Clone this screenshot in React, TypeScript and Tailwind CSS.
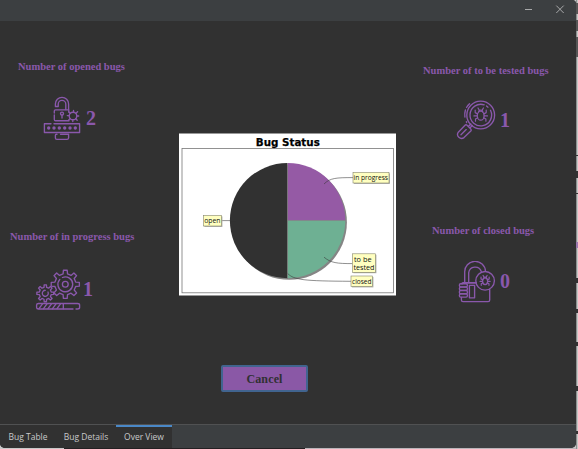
import React from "react";

const PURPLE = "#8a58ac";

function gearPath(cx: number, cy: number, outer: number, inner: number, teeth: number) {
  const pts: string[] = [];
  const step = (Math.PI * 2) / teeth;
  for (let i = 0; i < teeth; i++) {
    const a = i * step - Math.PI / 2;
    [
      [inner, -0.27],
      [outer, -0.17],
      [outer, 0.17],
      [inner, 0.27],
    ].forEach(([r, o]) => {
      pts.push(`${(cx + r * Math.cos(a + o * step)).toFixed(2)} ${(cy + r * Math.sin(a + o * step)).toFixed(2)}`);
    });
  }
  return `M${pts.join("L")}Z`;
}

function Bug({ x, y, s }: { x: number; y: number; s: number }) {
  return (
    <g transform={`translate(${x} ${y}) scale(${s})`} strokeWidth={1.2 / s}>
      <ellipse cx="0" cy="1" rx="3.3" ry="4.3" />
      <path d="M-2 -2.5C-2 -5 2 -5 2 -2.5M-1.4 -4.4L-2.6 -6.5M1.4 -4.4L2.6 -6.5M-3 -.8L-5.3 -2V-4.5M3 -.8L5.3 -2V-4.5M-3.3 1.2H-6.5M3.3 1.2H6.5M-2.8 3L-5 4.2V6.3M2.8 3L5 4.2V6.3" />
    </g>
  );
}

const iconProps = { fill: "none", stroke: PURPLE, strokeWidth: 1.35, strokeLinejoin: "round" as const, strokeLinecap: "round" as const };

function OpenedIcon() {
  return (
    <svg className="h-[45px] w-[38px] shrink-0" viewBox="43 96 38 45" {...iconProps}>
      <path d="M55.4 106.5V104a6.6 6.6 0 0 1 13.2 0V109.5M58.2 106.5V104.2a3.8 3.8 0 0 1 7.6 0V109.5M55.4 106.5H58.2" />
      <path d="M68 109.8H55.5a1.2 1.2 0 0 0-1.2 1.2V113M54.3 115V119.5a1.2 1.2 0 0 0 1.2 1.2H69" />
      <circle cx="62" cy="113.6" r="1.5" />
      <path d="M62 115.2V118M68.8 110V112" />
      <circle cx="73" cy="116" r="3.8" />
      <path d="M68.8 112L70.2 113.3M73.5 110.5V112M76 113.3L77.6 111.8M77 116H78.7M75.8 118.8L77.2 120.3M72.8 120V121.6M70 118.6L68.7 120M67.3 115.6H69" />
      <path d="M54 123.7H79.6V132.5H44.4V123.7H51" />
      <g fill={PURPLE} stroke="none">
        {[48.7, 54, 59.3, 64.7, 70, 75.3].map((x) => <circle key={x} cx={x} cy="128" r="1.7" />)}
      </g>
      <path d="M57 134.2H56.4a1 1 0 0 0-1 1V138a1.4 1.4 0 0 0 1.4 1.4H67a1.6 1.6 0 0 0 1.6-1.4V134.2H60.5" />
    </svg>
  );
}

function TestedIcon() {
  return (
    <svg className="h-[40px] w-[40px] shrink-0" viewBox="456 100 40 40" {...iconProps}>
      <circle cx="480.7" cy="115" r="13.9" />
      <path d="M490.5 110.3A10.8 10.8 0 1 1 484.2 104.8M486.5 106L488 107.2" />
      <path d="M466.6 122.5L466.4 121.6M464.9 117A16.2 16.2 0 0 1 465.4 110M466.5 107.5A16.5 16.5 0 0 1 469.5 103.8" />
      <path d="M466.8 125.1L470.8 129.1Q471.6 130 470.8 131L464 137.6C460.5 140.2 455.7 136 458.3 132.2L465 125.3Q466 124.3 466.8 125.1ZM468.4 126.4L470.8 124M469.9 127.9L472.3 125.5M461 134.8L466.2 129.6" />
      <Bug x={480.7} y={114.7} s={1.04} />
    </svg>
  );
}

function ProgressIcon() {
  return (
    <svg className="h-[42px] w-[46px] shrink-0" viewBox="35 269 46 42" {...iconProps}>
      <path d={gearPath(65.3, 284.3, 14.2, 10.6, 8)} />
      <path d="M62.5 277.5A7.4 7.4 0 1 1 59.8 279.4" />
      <circle cx="65.3" cy="284.3" r="2.9" />
      <path d={gearPath(45.3, 293.3, 8.5, 6.1, 8)} />
      <path d="M48 292A3 3 0 1 1 45.3 290.3" />
      <path d="M73 309H38.5Q36.6 309 36.6 307.5V305Q36.6 303.5 38.5 303.5H77.5Q79.6 303.5 79.6 305V307.5Q79.6 309 77.5 309H76" />
      <path d="M39 308.7L42.5 303.8M43.5 308.7L47 303.8M48 308.7L51.5 303.8M52.5 308.7L56 303.8M57 308.7L60.5 303.8M63.3 303.8V308.7" />
    </svg>
  );
}

function ClosedIcon() {
  return (
    <svg className="h-[42px] w-[38px] shrink-0" viewBox="458 261 38 42" {...iconProps}>
      <path d="M464.7 282.7V272.3a10.4 10.4 0 0 1 20.8-1M468.7 282.7V272.7a6.5 6.5 0 0 1 12.6-1.2M464.7 282.7H476" />
      <circle cx="485.1" cy="280.8" r="9.3" />
      <path d="M462 284V283.7a1 1 0 0 1 1-1H476M489.7 289.5V300a1.6 1.6 0 0 1-1.6 1.6H463a1.6 1.6 0 0 1-1.6-1.6V297.5" />
      {[283.7, 287.1, 290.5, 293.9].map((y) => <rect key={y} x="459.4" y={y} width="8" height="3.2" rx="1.3" />)}
      <rect x="469.4" y="285.4" width="5.2" height="12.4" />
      <Bug x={485.1} y={280.5} s={0.77} />
    </svg>
  );
}

function BugChart() {
  const labels = [
    { x: 353, y: 172.5, w: 36, h: 10.5 },
    { x: 203.5, y: 215.5, w: 18, h: 10.5 },
    { x: 352.5, y: 253.8, w: 23, h: 18.5 },
    { x: 351, y: 276, w: 21.5, h: 10.5 },
  ];
  return (
    <svg className="block h-[163px] w-[218px]" viewBox="179 133 218 163">
      <rect x="179" y="133.5" width="217" height="162" fill="#fff" />
      <rect x="182" y="148.5" width="211.5" height="144.3" fill="#fff" stroke="#777" strokeWidth=".8" />
      <text x="255.8" y="145.6" fontSize="11.2" fontWeight="700" fontFamily="'DejaVu Sans', sans-serif" textLength="64" lengthAdjust="spacingAndGlyphs" stroke="#000" strokeWidth=".25">Bug Status</text>
      <circle cx="289.3" cy="222.2" r="57.6" fill="#858585" />
      <path d="M287.5 163V278.2A57.6 57.6 0 0 1 287.5 163Z" fill="#313131" />
      <path d="M287.7 220.5V163A57.6 57.6 0 0 1 345.3 220.5Z" fill="#955aa5" />
      <path d="M287.7 220.5H345.3A57.6 57.6 0 0 1 287.7 278.2Z" fill="#6eb093" />
      <path d="M287.5 163V278.2M287.5 220.5H345.3" stroke="#858585" strokeWidth=".6" />
      <g fill="none" stroke="#333" strokeWidth=".55">
        <path d="M324 184C330 178 336 177.6 353 177.6M222 220.6H236M324 257.2C331 263 337 263.6 352.5 263.6M287.7 273.5C294 280 304 281 351 281.3" />
      </g>
      {labels.map((l) => (
        <g key={l.y}>
          <rect x={l.x + 0.9} y={l.y + 0.9} width={l.w} height={l.h} fill="#aaa" />
          <rect x={l.x} y={l.y} width={l.w} height={l.h} fill="#ffffc0" stroke="#85856a" strokeWidth=".6" />
        </g>
      ))}
      <g fontSize="7.6" fontFamily="'Open Sans', sans-serif" fill="#111">
        <text x="353.5" y="180.4" textLength="34.5" lengthAdjust="spacingAndGlyphs">in progress</text>
        <text x="204.2" y="223.2" textLength="16.3" lengthAdjust="spacingAndGlyphs">open</text>
        <text x="354" y="261.7" textLength="17.5" lengthAdjust="spacingAndGlyphs">to be</text>
        <text x="353.5" y="270.2" textLength="21" lengthAdjust="spacingAndGlyphs">tested</text>
        <text x="352" y="284" textLength="19.5" lengthAdjust="spacingAndGlyphs">closed</text>
      </g>
    </svg>
  );
}

interface StatProps {
  title: string;
  value: number;
  icon: React.ReactNode;
  className: string;
  titleClass: string;
  rowClass: string;
  valueClass: string;
}

function Stat({ title, value, icon, className, titleClass, rowClass, valueClass }: StatProps) {
  return (
    <section className={`flex flex-col items-start ${className}`}>
      <h2 className={`whitespace-nowrap text-[10.5px] leading-[12px] font-bold ${titleClass}`}>{title}</h2>
      <div className={`flex items-start ${rowClass}`}>
        {icon}
        <span className={`text-[20px] leading-[22px] font-bold ${valueClass}`}>{value}</span>
      </div>
    </section>
  );
}

export default function App() {
  return (
    <div className="flex h-[449px] w-[578px] overflow-hidden bg-[#c8c8c8]">
      <div className="flex h-[449px] w-[576px] flex-col">
        <div className="flex h-[448px] flex-col overflow-hidden rounded-b-[5px] rounded-tr-[4px] bg-[#313131]">
          <header className="flex h-[21px] shrink-0 items-start justify-end bg-[#3c3f41] pt-[5px] pr-[11px]">
            <svg className="h-[9px] w-[41px]" viewBox="524 5 41 9" fill="none" stroke="#a8a9aa" strokeWidth="1">
              <path d="M525 9.5H532M556.3 5.6L563.7 13M563.7 5.6L556.3 13" />
            </svg>
          </header>
          <main className="flex h-[403px] shrink-0 font-['Liberation_Serif',serif] text-[#8a58ac]">
            <div className="flex w-[178px] shrink-0 flex-col">
              <Stat title="Number of opened bugs" value={2} icon={<OpenedIcon />} className="h-[170px] pt-[40px]" titleClass="ml-[18px]" rowClass="mt-[23px] ml-[43px]" valueClass="mt-[11px] ml-[5px]" />
              <Stat title="Number of in progress bugs" value={1} icon={<ProgressIcon />} className="pt-[40px]" titleClass="ml-[10px]" rowClass="mt-[26px] ml-[35px]" valueClass="mt-[9px] ml-[2px]" />
            </div>
            <div className="flex w-[220px] shrink-0 flex-col items-center pt-[112px]">
              <BugChart />
              <button className="mt-[69px] mr-[47px] h-[27px] w-[87px] rounded-[2px] border-2 border-[#41648f] bg-[#8a58a6] text-[12px] leading-[22px] font-bold tracking-[0.15px] text-[#303033]">Cancel</button>
            </div>
            <div className="flex min-w-0 flex-1 flex-col">
              <Stat title="Number of to be tested bugs" value={1} icon={<TestedIcon />} className="h-[160px] pt-[44px]" titleClass="ml-[25px]" rowClass="mt-[23px] ml-[58px]" valueClass="mt-[9px] ml-[4px]" />
              <Stat title="Number of closed bugs" value={0} icon={<ClosedIcon />} className="pt-[44px]" titleClass="ml-[34px]" rowClass="mt-[24px] ml-[60px]" valueClass="mt-[9px] ml-[4px]" />
            </div>
          </main>
          <nav className="flex h-[24px] shrink-0 border-t border-[#505152] bg-[#3c3f41] font-['Open_Sans',sans-serif] text-[8.5px] leading-[23px] text-[#c8c9ca]">
            <div className="w-[56px] bg-[#313131] text-center">Bug Table</div>
            <div className="w-[60px] bg-[#313131] text-center">Bug Details</div>
            <div className="w-[56px] border-t-2 border-[#4a88c7] bg-[#313131] text-center leading-[20px]">Over View</div>
          </nav>
        </div>
        <div className="flex h-px shrink-0">
          <div className="w-[64px] bg-[#c8c8c8]" />
          <div className="w-[241px] bg-[#242022]" />
          <div className="flex-1 bg-[#bbb5ba]" />
        </div>
      </div>
      <svg className="h-[449px] w-[2px] shrink-0" viewBox="0 0 2 449">
        <rect width="2" height="449" fill="#c6c7c6" />
        <path d="M0 0H1V449H0Z" fill="#8e9090" />
        <path d="M0 3H2V14H0ZM0 20H2V31H0ZM0 37H2V57H0Z" fill="#555" />
        <path d="M0 155H2V156H0ZM0 171H2V178H0ZM0 193H2V194H0ZM0 278H2V283H0ZM0 309H2V313H0ZM0 342H2V346H0ZM0 386H2V391H0ZM0 431H2V434H0Z" fill="#333" />
        <path d="M0 242H2V248H0Z" fill="#9b78ad" />
      </svg>
    </div>
  );
}
